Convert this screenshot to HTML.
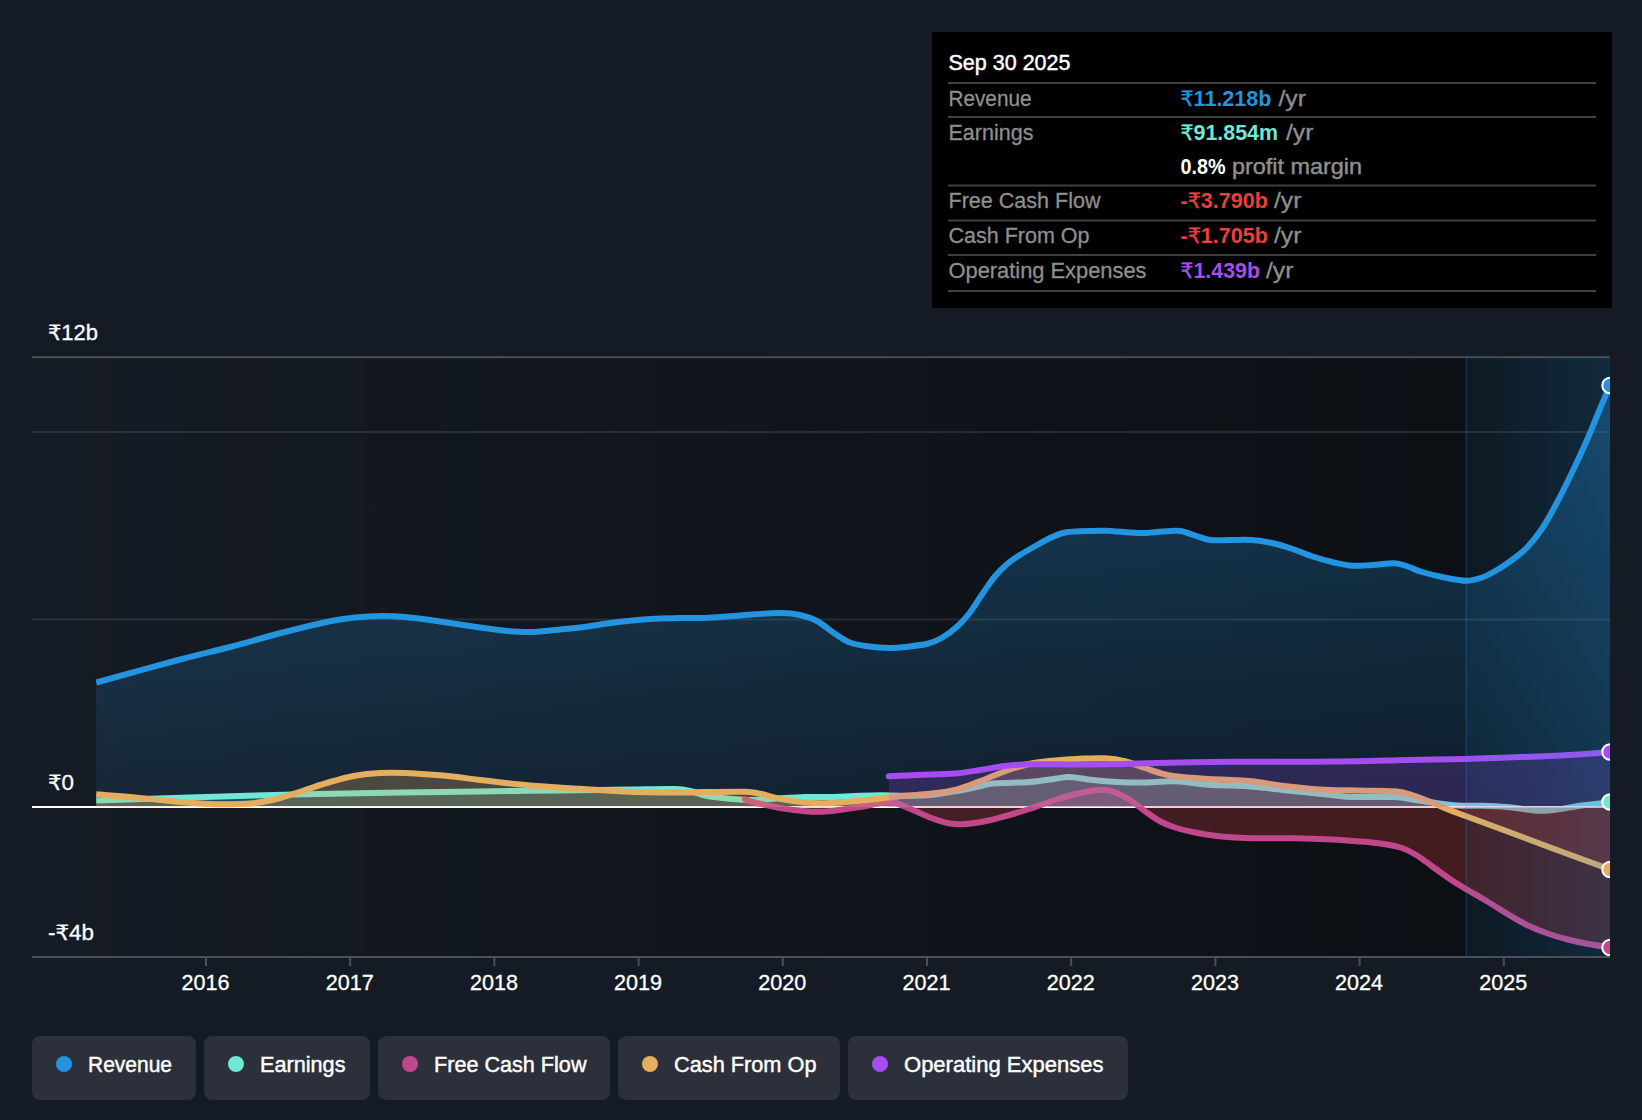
<!DOCTYPE html>
<html lang="en">
<head>
<meta charset="utf-8">
<title>Earnings and Revenue History</title>
<style>
html,body{margin:0;padding:0;background:#151b24;}
body{width:1642px;height:1120px;overflow:hidden;font-family:"Liberation Sans","DejaVu Sans",sans-serif;}
svg{display:block;position:absolute;left:0;top:0;}
text{font-family:"Liberation Sans","DejaVu Sans",sans-serif;font-size:22px;}
.rs{font-family:"DejaVu Sans",sans-serif;}
.ax{fill:#ffffff;}
.lab{fill:#8f8f8f;}
.md{stroke-width:0.45px;paint-order:stroke;}
.b{font-weight:700;}
.vals text{paint-order:stroke;stroke-width:0;}
.sk{stroke:#fff;stroke-width:0.3px;paint-order:stroke;}
.lab{stroke:#8f8f8f;stroke-width:0.3px;paint-order:stroke;}
</style>
</head>
<body>
<svg width="1642" height="1120" viewBox="0 0 1642 1120">
<defs>
  <linearGradient id="plotbg" x1="32" x2="1466" y1="0" y2="0" gradientUnits="userSpaceOnUse">
    <stop offset="0" stop-color="#000" stop-opacity="0"/>
    <stop offset="1" stop-color="#000" stop-opacity="0.42"/>
  </linearGradient>
  <linearGradient id="hl" x1="1466" x2="1610" y1="0" y2="0" gradientUnits="userSpaceOnUse">
    <stop offset="0" stop-color="#2394df" stop-opacity="0.075"/>
    <stop offset="1" stop-color="#2394df" stop-opacity="0.20"/>
  </linearGradient>
  <linearGradient id="revfill" x1="0" x2="0" y1="385" y2="806" gradientUnits="userSpaceOnUse">
    <stop offset="0" stop-color="#2394df" stop-opacity="0.315"/>
    <stop offset="1" stop-color="#2394df" stop-opacity="0.105"/>
  </linearGradient>
  <linearGradient id="revhl" x1="1466" x2="1610" y1="0" y2="0" gradientUnits="userSpaceOnUse">
    <stop offset="0" stop-color="#2394df" stop-opacity="0.02"/>
    <stop offset="1" stop-color="#2394df" stop-opacity="0.28"/>
  </linearGradient>
  <clipPath id="plotclip"><rect x="32" y="340" width="1578" height="640"/></clipPath>
  <clipPath id="hlclip"><rect x="1466" y="340" width="144" height="640"/></clipPath>
  <clipPath id="above"><rect x="32" y="340" width="1578" height="467"/></clipPath>
  <clipPath id="below"><rect x="32" y="807" width="1578" height="200"/></clipPath>
</defs>

<!-- plot background -->
<rect x="32" y="357" width="1434" height="600" fill="url(#plotbg)"/>
<rect x="1466" y="357" width="144" height="600" fill="#000" fill-opacity="0.42"/>

<!-- gridlines -->
<rect x="32" y="356.2" width="1578" height="2" fill="#ffffff" fill-opacity="0.23"/>
<rect x="32" y="431" width="1578" height="2" fill="#ffffff" fill-opacity="0.10"/>
<rect x="32" y="618.5" width="1578" height="2" fill="#ffffff" fill-opacity="0.10"/>

<g clip-path="url(#plotclip)">
  <!-- revenue -->
  <path d="M96.25,682.50C110.21,678.67 157.71,665.42 180.00,659.50C202.29,653.58 213.33,651.38 230.00,647.00C246.67,642.62 263.33,637.54 280.00,633.25C296.67,628.96 317.50,623.88 330.00,621.25C342.50,618.62 346.25,618.38 355.00,617.50C363.75,616.62 374.17,616.08 382.50,616.00C390.83,615.92 397.08,616.33 405.00,617.00C412.92,617.67 421.67,618.88 430.00,620.00C438.33,621.12 446.67,622.50 455.00,623.75C463.33,625.00 471.67,626.33 480.00,627.50C488.33,628.67 496.67,630.00 505.00,630.75C513.33,631.50 521.67,632.12 530.00,632.00C538.33,631.88 546.67,630.75 555.00,630.00C563.33,629.25 571.67,628.54 580.00,627.50C588.33,626.46 596.67,624.88 605.00,623.75C613.33,622.62 621.67,621.58 630.00,620.75C638.33,619.92 646.67,619.21 655.00,618.75C663.33,618.29 671.67,618.12 680.00,618.00C688.33,617.88 696.67,618.29 705.00,618.00C713.33,617.71 721.67,616.88 730.00,616.25C738.33,615.62 746.67,614.79 755.00,614.25C763.33,613.71 772.50,612.88 780.00,613.00C787.50,613.12 793.75,613.62 800.00,615.00C806.25,616.38 811.67,618.12 817.50,621.25C823.33,624.38 829.58,630.21 835.00,633.75C840.42,637.29 844.58,640.42 850.00,642.50C855.42,644.58 860.83,645.33 867.50,646.25C874.17,647.17 883.75,647.88 890.00,648.00C896.25,648.12 898.75,647.71 905.00,647.00C911.25,646.29 921.25,645.33 927.50,643.75C933.75,642.17 937.50,640.42 942.50,637.50C947.50,634.58 952.92,630.42 957.50,626.25C962.08,622.08 965.83,617.92 970.00,612.50C974.17,607.08 978.33,599.79 982.50,593.75C986.67,587.71 990.83,581.25 995.00,576.25C999.17,571.25 1003.33,567.29 1007.50,563.75C1011.67,560.21 1015.42,557.92 1020.00,555.00C1024.58,552.08 1030.00,549.08 1035.00,546.25C1040.00,543.42 1045.00,540.29 1050.00,538.00C1055.00,535.71 1060.00,533.62 1065.00,532.50C1070.00,531.38 1073.33,531.54 1080.00,531.25C1086.67,530.96 1096.67,530.54 1105.00,530.75C1113.33,530.96 1123.33,532.12 1130.00,532.50C1136.67,532.88 1139.58,533.17 1145.00,533.00C1150.42,532.83 1156.67,531.83 1162.50,531.50C1168.33,531.17 1174.58,530.33 1180.00,531.00C1185.42,531.67 1190.00,534.00 1195.00,535.50C1200.00,537.00 1204.17,539.25 1210.00,540.00C1215.83,540.75 1223.00,540.00 1230.00,540.00C1237.00,540.00 1245.00,539.50 1252.00,540.00C1259.00,540.50 1265.33,541.54 1272.00,543.00C1278.67,544.46 1285.33,546.54 1292.00,548.75C1298.67,550.96 1305.33,554.04 1312.00,556.25C1318.67,558.46 1325.33,560.42 1332.00,562.00C1338.67,563.58 1345.33,565.25 1352.00,565.75C1358.67,566.25 1364.92,565.42 1372.00,565.00C1379.08,564.58 1388.67,563.04 1394.50,563.25C1400.33,563.46 1402.42,564.79 1407.00,566.25C1411.58,567.71 1415.75,570.12 1422.00,572.00C1428.25,573.88 1437.12,576.04 1444.50,577.50C1451.88,578.96 1460.00,580.75 1466.25,580.75C1472.50,580.75 1476.88,579.29 1482.00,577.50C1487.12,575.71 1492.00,572.92 1497.00,570.00C1502.00,567.08 1507.00,563.75 1512.00,560.00C1517.00,556.25 1522.00,552.71 1527.00,547.50C1532.00,542.29 1537.00,536.25 1542.00,528.75C1547.00,521.25 1552.00,511.88 1557.00,502.50C1562.00,493.12 1567.00,482.92 1572.00,472.50C1577.00,462.08 1582.42,450.42 1587.00,440.00C1591.58,429.58 1595.67,419.08 1599.50,410.00C1603.33,400.92 1608.25,389.58 1610.00,385.50L1610.00,807L96.25,807Z" fill="url(#revfill)"/>
  <path d="M96.25,682.50C110.21,678.67 157.71,665.42 180.00,659.50C202.29,653.58 213.33,651.38 230.00,647.00C246.67,642.62 263.33,637.54 280.00,633.25C296.67,628.96 317.50,623.88 330.00,621.25C342.50,618.62 346.25,618.38 355.00,617.50C363.75,616.62 374.17,616.08 382.50,616.00C390.83,615.92 397.08,616.33 405.00,617.00C412.92,617.67 421.67,618.88 430.00,620.00C438.33,621.12 446.67,622.50 455.00,623.75C463.33,625.00 471.67,626.33 480.00,627.50C488.33,628.67 496.67,630.00 505.00,630.75C513.33,631.50 521.67,632.12 530.00,632.00C538.33,631.88 546.67,630.75 555.00,630.00C563.33,629.25 571.67,628.54 580.00,627.50C588.33,626.46 596.67,624.88 605.00,623.75C613.33,622.62 621.67,621.58 630.00,620.75C638.33,619.92 646.67,619.21 655.00,618.75C663.33,618.29 671.67,618.12 680.00,618.00C688.33,617.88 696.67,618.29 705.00,618.00C713.33,617.71 721.67,616.88 730.00,616.25C738.33,615.62 746.67,614.79 755.00,614.25C763.33,613.71 772.50,612.88 780.00,613.00C787.50,613.12 793.75,613.62 800.00,615.00C806.25,616.38 811.67,618.12 817.50,621.25C823.33,624.38 829.58,630.21 835.00,633.75C840.42,637.29 844.58,640.42 850.00,642.50C855.42,644.58 860.83,645.33 867.50,646.25C874.17,647.17 883.75,647.88 890.00,648.00C896.25,648.12 898.75,647.71 905.00,647.00C911.25,646.29 921.25,645.33 927.50,643.75C933.75,642.17 937.50,640.42 942.50,637.50C947.50,634.58 952.92,630.42 957.50,626.25C962.08,622.08 965.83,617.92 970.00,612.50C974.17,607.08 978.33,599.79 982.50,593.75C986.67,587.71 990.83,581.25 995.00,576.25C999.17,571.25 1003.33,567.29 1007.50,563.75C1011.67,560.21 1015.42,557.92 1020.00,555.00C1024.58,552.08 1030.00,549.08 1035.00,546.25C1040.00,543.42 1045.00,540.29 1050.00,538.00C1055.00,535.71 1060.00,533.62 1065.00,532.50C1070.00,531.38 1073.33,531.54 1080.00,531.25C1086.67,530.96 1096.67,530.54 1105.00,530.75C1113.33,530.96 1123.33,532.12 1130.00,532.50C1136.67,532.88 1139.58,533.17 1145.00,533.00C1150.42,532.83 1156.67,531.83 1162.50,531.50C1168.33,531.17 1174.58,530.33 1180.00,531.00C1185.42,531.67 1190.00,534.00 1195.00,535.50C1200.00,537.00 1204.17,539.25 1210.00,540.00C1215.83,540.75 1223.00,540.00 1230.00,540.00C1237.00,540.00 1245.00,539.50 1252.00,540.00C1259.00,540.50 1265.33,541.54 1272.00,543.00C1278.67,544.46 1285.33,546.54 1292.00,548.75C1298.67,550.96 1305.33,554.04 1312.00,556.25C1318.67,558.46 1325.33,560.42 1332.00,562.00C1338.67,563.58 1345.33,565.25 1352.00,565.75C1358.67,566.25 1364.92,565.42 1372.00,565.00C1379.08,564.58 1388.67,563.04 1394.50,563.25C1400.33,563.46 1402.42,564.79 1407.00,566.25C1411.58,567.71 1415.75,570.12 1422.00,572.00C1428.25,573.88 1437.12,576.04 1444.50,577.50C1451.88,578.96 1460.00,580.75 1466.25,580.75C1472.50,580.75 1476.88,579.29 1482.00,577.50C1487.12,575.71 1492.00,572.92 1497.00,570.00C1502.00,567.08 1507.00,563.75 1512.00,560.00C1517.00,556.25 1522.00,552.71 1527.00,547.50C1532.00,542.29 1537.00,536.25 1542.00,528.75C1547.00,521.25 1552.00,511.88 1557.00,502.50C1562.00,493.12 1567.00,482.92 1572.00,472.50C1577.00,462.08 1582.42,450.42 1587.00,440.00C1591.58,429.58 1595.67,419.08 1599.50,410.00C1603.33,400.92 1608.25,389.58 1610.00,385.50" fill="none" stroke="#2394df" stroke-width="6" stroke-linejoin="round" stroke-linecap="butt"/>

  <!-- earnings -->
  <path d="M96.25,800.50C122.71,799.67 216.04,796.62 255.00,795.50C293.96,794.38 292.50,794.42 330.00,793.75C367.50,793.08 446.67,792.00 480.00,791.50C513.33,791.00 513.33,790.95 530.00,790.75C546.67,790.55 563.33,790.49 580.00,790.30C596.67,790.11 614.17,789.82 630.00,789.60C645.83,789.38 664.67,788.68 675.00,789.00C685.33,789.32 687.00,790.42 692.00,791.50C697.00,792.58 698.67,794.29 705.00,795.50C711.33,796.71 721.67,798.00 730.00,798.75C738.33,799.50 746.67,800.08 755.00,800.00C763.33,799.92 771.67,798.80 780.00,798.30C788.33,797.80 796.67,797.22 805.00,797.00C813.33,796.78 821.67,797.17 830.00,797.00C838.33,796.83 846.67,796.28 855.00,796.00C863.33,795.72 871.67,795.34 880.00,795.30C888.33,795.26 896.67,795.80 905.00,795.75C913.33,795.70 921.67,795.75 930.00,795.00C938.33,794.25 946.67,792.71 955.00,791.25C963.33,789.79 973.33,787.58 980.00,786.25C986.67,784.92 986.67,783.96 995.00,783.25C1003.33,782.54 1020.00,782.75 1030.00,782.00C1040.00,781.25 1048.33,779.58 1055.00,778.75C1061.67,777.92 1063.75,776.79 1070.00,777.00C1076.25,777.21 1084.58,779.17 1092.50,780.00C1100.42,780.83 1109.17,781.58 1117.50,782.00C1125.83,782.42 1132.92,782.62 1142.50,782.50C1152.08,782.38 1164.58,780.92 1175.00,781.25C1185.42,781.58 1195.50,783.79 1205.00,784.50C1214.50,785.21 1223.33,785.08 1232.00,785.50C1240.67,785.92 1246.58,786.04 1257.00,787.00C1267.42,787.96 1282.00,789.92 1294.50,791.25C1307.00,792.58 1322.42,794.04 1332.00,795.00C1341.58,795.96 1341.58,796.67 1352.00,797.00C1362.42,797.33 1384.50,796.58 1394.50,797.00C1404.50,797.42 1405.75,798.58 1412.00,799.50C1418.25,800.42 1424.50,801.50 1432.00,802.50C1439.50,803.50 1448.67,804.96 1457.00,805.50C1465.33,806.04 1473.67,805.50 1482.00,805.75C1490.33,806.00 1499.50,806.38 1507.00,807.00C1514.50,807.62 1521.17,808.88 1527.00,809.50C1532.83,810.12 1537.00,810.75 1542.00,810.75C1547.00,810.75 1550.33,810.38 1557.00,809.50C1563.67,808.62 1573.17,806.75 1582.00,805.50C1590.83,804.25 1605.33,802.58 1610.00,802.00L1610.00,807L96.25,807Z" fill="#71e7d6" fill-opacity="0.20"/>
  <path d="M96.25,800.50C122.71,799.67 216.04,796.62 255.00,795.50C293.96,794.38 292.50,794.42 330.00,793.75C367.50,793.08 446.67,792.00 480.00,791.50C513.33,791.00 513.33,790.95 530.00,790.75C546.67,790.55 563.33,790.49 580.00,790.30C596.67,790.11 614.17,789.82 630.00,789.60C645.83,789.38 664.67,788.68 675.00,789.00C685.33,789.32 687.00,790.42 692.00,791.50C697.00,792.58 698.67,794.29 705.00,795.50C711.33,796.71 721.67,798.00 730.00,798.75C738.33,799.50 746.67,800.08 755.00,800.00C763.33,799.92 771.67,798.80 780.00,798.30C788.33,797.80 796.67,797.22 805.00,797.00C813.33,796.78 821.67,797.17 830.00,797.00C838.33,796.83 846.67,796.28 855.00,796.00C863.33,795.72 871.67,795.34 880.00,795.30C888.33,795.26 896.67,795.80 905.00,795.75C913.33,795.70 921.67,795.75 930.00,795.00C938.33,794.25 946.67,792.71 955.00,791.25C963.33,789.79 973.33,787.58 980.00,786.25C986.67,784.92 986.67,783.96 995.00,783.25C1003.33,782.54 1020.00,782.75 1030.00,782.00C1040.00,781.25 1048.33,779.58 1055.00,778.75C1061.67,777.92 1063.75,776.79 1070.00,777.00C1076.25,777.21 1084.58,779.17 1092.50,780.00C1100.42,780.83 1109.17,781.58 1117.50,782.00C1125.83,782.42 1132.92,782.62 1142.50,782.50C1152.08,782.38 1164.58,780.92 1175.00,781.25C1185.42,781.58 1195.50,783.79 1205.00,784.50C1214.50,785.21 1223.33,785.08 1232.00,785.50C1240.67,785.92 1246.58,786.04 1257.00,787.00C1267.42,787.96 1282.00,789.92 1294.50,791.25C1307.00,792.58 1322.42,794.04 1332.00,795.00C1341.58,795.96 1341.58,796.67 1352.00,797.00C1362.42,797.33 1384.50,796.58 1394.50,797.00C1404.50,797.42 1405.75,798.58 1412.00,799.50C1418.25,800.42 1424.50,801.50 1432.00,802.50C1439.50,803.50 1448.67,804.96 1457.00,805.50C1465.33,806.04 1473.67,805.50 1482.00,805.75C1490.33,806.00 1499.50,806.38 1507.00,807.00C1514.50,807.62 1521.17,808.88 1527.00,809.50C1532.83,810.12 1537.00,810.75 1542.00,810.75C1547.00,810.75 1550.33,810.38 1557.00,809.50C1563.67,808.62 1573.17,806.75 1582.00,805.50C1590.83,804.25 1605.33,802.58 1610.00,802.00" fill="none" stroke="#71e7d6" stroke-width="6" stroke-linejoin="round"/>

  <!-- zero line -->
  <rect x="32" y="806" width="1578" height="2" fill="#ffffff"/>

  <!-- fcf -->
  <g clip-path="url(#below)"><path d="M745.00,799.25C746.67,799.79 749.17,801.04 755.00,802.50C760.83,803.96 771.67,806.54 780.00,808.00C788.33,809.46 797.92,810.62 805.00,811.25C812.08,811.88 816.25,812.04 822.50,811.75C828.75,811.46 835.00,810.50 842.50,809.50C850.00,808.50 861.25,806.83 867.50,805.75C873.75,804.67 875.42,803.46 880.00,803.00C884.58,802.54 890.00,802.04 895.00,803.00C900.00,803.96 904.17,806.33 910.00,808.75C915.83,811.17 923.75,815.12 930.00,817.50C936.25,819.88 942.08,821.88 947.50,823.00C952.92,824.12 956.25,824.54 962.50,824.25C968.75,823.96 977.92,822.58 985.00,821.25C992.08,819.92 997.50,818.33 1005.00,816.25C1012.50,814.17 1021.67,811.46 1030.00,808.75C1038.33,806.04 1046.67,802.62 1055.00,800.00C1063.33,797.38 1072.50,794.67 1080.00,793.00C1087.50,791.33 1094.58,790.29 1100.00,790.00C1105.42,789.71 1107.50,789.58 1112.50,791.25C1117.50,792.92 1124.58,796.67 1130.00,800.00C1135.42,803.33 1140.00,807.71 1145.00,811.25C1150.00,814.79 1155.00,818.54 1160.00,821.25C1165.00,823.96 1169.17,825.62 1175.00,827.50C1180.83,829.38 1188.33,831.12 1195.00,832.50C1201.67,833.88 1208.33,834.92 1215.00,835.75C1221.67,836.58 1228.00,837.08 1235.00,837.50C1242.00,837.92 1247.08,838.12 1257.00,838.25C1266.92,838.38 1282.00,838.04 1294.50,838.25C1307.00,838.46 1321.58,839.00 1332.00,839.50C1342.42,840.00 1348.67,840.54 1357.00,841.25C1365.33,841.96 1374.50,842.62 1382.00,843.75C1389.50,844.88 1396.17,846.04 1402.00,848.00C1407.83,849.96 1412.00,852.46 1417.00,855.50C1422.00,858.54 1426.58,862.38 1432.00,866.25C1437.42,870.12 1443.79,874.92 1449.50,878.75C1455.21,882.58 1460.00,885.50 1466.25,889.25C1472.50,893.00 1480.21,897.17 1487.00,901.25C1493.79,905.33 1500.33,909.79 1507.00,913.75C1513.67,917.71 1520.33,921.75 1527.00,925.00C1533.67,928.25 1540.33,930.88 1547.00,933.25C1553.67,935.62 1560.33,937.50 1567.00,939.25C1573.67,941.00 1579.83,942.38 1587.00,943.75C1594.17,945.12 1606.17,946.88 1610.00,947.50L1610.00,807L745.00,807Z" fill="#e64141" fill-opacity="0.25"/></g>
  <g clip-path="url(#above)"><path d="M745.00,799.25C746.67,799.79 749.17,801.04 755.00,802.50C760.83,803.96 771.67,806.54 780.00,808.00C788.33,809.46 797.92,810.62 805.00,811.25C812.08,811.88 816.25,812.04 822.50,811.75C828.75,811.46 835.00,810.50 842.50,809.50C850.00,808.50 861.25,806.83 867.50,805.75C873.75,804.67 875.42,803.46 880.00,803.00C884.58,802.54 890.00,802.04 895.00,803.00C900.00,803.96 904.17,806.33 910.00,808.75C915.83,811.17 923.75,815.12 930.00,817.50C936.25,819.88 942.08,821.88 947.50,823.00C952.92,824.12 956.25,824.54 962.50,824.25C968.75,823.96 977.92,822.58 985.00,821.25C992.08,819.92 997.50,818.33 1005.00,816.25C1012.50,814.17 1021.67,811.46 1030.00,808.75C1038.33,806.04 1046.67,802.62 1055.00,800.00C1063.33,797.38 1072.50,794.67 1080.00,793.00C1087.50,791.33 1094.58,790.29 1100.00,790.00C1105.42,789.71 1107.50,789.58 1112.50,791.25C1117.50,792.92 1124.58,796.67 1130.00,800.00C1135.42,803.33 1140.00,807.71 1145.00,811.25C1150.00,814.79 1155.00,818.54 1160.00,821.25C1165.00,823.96 1169.17,825.62 1175.00,827.50C1180.83,829.38 1188.33,831.12 1195.00,832.50C1201.67,833.88 1208.33,834.92 1215.00,835.75C1221.67,836.58 1228.00,837.08 1235.00,837.50C1242.00,837.92 1247.08,838.12 1257.00,838.25C1266.92,838.38 1282.00,838.04 1294.50,838.25C1307.00,838.46 1321.58,839.00 1332.00,839.50C1342.42,840.00 1348.67,840.54 1357.00,841.25C1365.33,841.96 1374.50,842.62 1382.00,843.75C1389.50,844.88 1396.17,846.04 1402.00,848.00C1407.83,849.96 1412.00,852.46 1417.00,855.50C1422.00,858.54 1426.58,862.38 1432.00,866.25C1437.42,870.12 1443.79,874.92 1449.50,878.75C1455.21,882.58 1460.00,885.50 1466.25,889.25C1472.50,893.00 1480.21,897.17 1487.00,901.25C1493.79,905.33 1500.33,909.79 1507.00,913.75C1513.67,917.71 1520.33,921.75 1527.00,925.00C1533.67,928.25 1540.33,930.88 1547.00,933.25C1553.67,935.62 1560.33,937.50 1567.00,939.25C1573.67,941.00 1579.83,942.38 1587.00,943.75C1594.17,945.12 1606.17,946.88 1610.00,947.50L1610.00,807L745.00,807Z" fill="#c2478a" fill-opacity="0.22"/></g>
  <path d="M745.00,799.25C746.67,799.79 749.17,801.04 755.00,802.50C760.83,803.96 771.67,806.54 780.00,808.00C788.33,809.46 797.92,810.62 805.00,811.25C812.08,811.88 816.25,812.04 822.50,811.75C828.75,811.46 835.00,810.50 842.50,809.50C850.00,808.50 861.25,806.83 867.50,805.75C873.75,804.67 875.42,803.46 880.00,803.00C884.58,802.54 890.00,802.04 895.00,803.00C900.00,803.96 904.17,806.33 910.00,808.75C915.83,811.17 923.75,815.12 930.00,817.50C936.25,819.88 942.08,821.88 947.50,823.00C952.92,824.12 956.25,824.54 962.50,824.25C968.75,823.96 977.92,822.58 985.00,821.25C992.08,819.92 997.50,818.33 1005.00,816.25C1012.50,814.17 1021.67,811.46 1030.00,808.75C1038.33,806.04 1046.67,802.62 1055.00,800.00C1063.33,797.38 1072.50,794.67 1080.00,793.00C1087.50,791.33 1094.58,790.29 1100.00,790.00C1105.42,789.71 1107.50,789.58 1112.50,791.25C1117.50,792.92 1124.58,796.67 1130.00,800.00C1135.42,803.33 1140.00,807.71 1145.00,811.25C1150.00,814.79 1155.00,818.54 1160.00,821.25C1165.00,823.96 1169.17,825.62 1175.00,827.50C1180.83,829.38 1188.33,831.12 1195.00,832.50C1201.67,833.88 1208.33,834.92 1215.00,835.75C1221.67,836.58 1228.00,837.08 1235.00,837.50C1242.00,837.92 1247.08,838.12 1257.00,838.25C1266.92,838.38 1282.00,838.04 1294.50,838.25C1307.00,838.46 1321.58,839.00 1332.00,839.50C1342.42,840.00 1348.67,840.54 1357.00,841.25C1365.33,841.96 1374.50,842.62 1382.00,843.75C1389.50,844.88 1396.17,846.04 1402.00,848.00C1407.83,849.96 1412.00,852.46 1417.00,855.50C1422.00,858.54 1426.58,862.38 1432.00,866.25C1437.42,870.12 1443.79,874.92 1449.50,878.75C1455.21,882.58 1460.00,885.50 1466.25,889.25C1472.50,893.00 1480.21,897.17 1487.00,901.25C1493.79,905.33 1500.33,909.79 1507.00,913.75C1513.67,917.71 1520.33,921.75 1527.00,925.00C1533.67,928.25 1540.33,930.88 1547.00,933.25C1553.67,935.62 1560.33,937.50 1567.00,939.25C1573.67,941.00 1579.83,942.38 1587.00,943.75C1594.17,945.12 1606.17,946.88 1610.00,947.50" fill="none" stroke="#c2478a" stroke-width="6" stroke-linejoin="round" stroke-linecap="round"/>

  <!-- cash from op -->
  <g clip-path="url(#below)"><path d="M96.25,794.25C101.88,794.71 116.04,795.71 130.00,797.00C143.96,798.29 167.50,800.88 180.00,802.00C192.50,803.12 196.67,803.38 205.00,803.75C213.33,804.12 221.67,804.38 230.00,804.25C238.33,804.12 246.67,804.04 255.00,803.00C263.33,801.96 271.67,800.17 280.00,798.00C288.33,795.83 296.67,792.67 305.00,790.00C313.33,787.33 321.67,784.38 330.00,782.00C338.33,779.62 346.67,777.25 355.00,775.75C363.33,774.25 371.67,773.46 380.00,773.00C388.33,772.54 396.67,772.75 405.00,773.00C413.33,773.25 421.67,773.88 430.00,774.50C438.33,775.12 446.67,775.83 455.00,776.75C463.33,777.67 467.50,778.54 480.00,780.00C492.50,781.46 513.33,784.04 530.00,785.50C546.67,786.96 563.33,787.71 580.00,788.75C596.67,789.79 613.33,791.12 630.00,791.75C646.67,792.38 667.50,792.46 680.00,792.50C692.50,792.54 694.17,792.12 705.00,792.00C715.83,791.88 735.83,791.46 745.00,791.75C754.17,792.04 754.17,792.59 760.00,793.75C765.83,794.91 772.50,797.24 780.00,798.70C787.50,800.16 797.50,801.74 805.00,802.50C812.50,803.26 816.67,803.46 825.00,803.25C833.33,803.04 845.83,802.04 855.00,801.25C864.17,800.46 871.67,799.42 880.00,798.50C888.33,797.58 896.67,796.54 905.00,795.75C913.33,794.96 921.67,794.71 930.00,793.75C938.33,792.79 946.67,792.08 955.00,790.00C963.33,787.92 971.67,784.38 980.00,781.25C988.33,778.12 996.67,774.17 1005.00,771.25C1013.33,768.33 1021.67,765.54 1030.00,763.75C1038.33,761.96 1046.67,761.33 1055.00,760.50C1063.33,759.67 1071.67,759.12 1080.00,758.75C1088.33,758.38 1097.50,757.83 1105.00,758.25C1112.50,758.67 1118.33,759.62 1125.00,761.25C1131.67,762.88 1139.17,766.04 1145.00,768.00C1150.83,769.96 1155.00,771.62 1160.00,773.00C1165.00,774.38 1167.50,775.29 1175.00,776.25C1182.50,777.21 1195.50,778.12 1205.00,778.75C1214.50,779.38 1224.17,779.58 1232.00,780.00C1239.83,780.42 1243.67,780.29 1252.00,781.25C1260.33,782.21 1270.75,784.38 1282.00,785.75C1293.25,787.12 1307.00,788.71 1319.50,789.50C1332.00,790.29 1344.50,790.21 1357.00,790.50C1369.50,790.79 1385.33,790.50 1394.50,791.25C1403.67,792.00 1405.75,793.12 1412.00,795.00C1418.25,796.88 1425.75,800.00 1432.00,802.50C1438.25,805.00 1443.79,807.71 1449.50,810.00C1455.21,812.29 1456.67,812.71 1466.25,816.25C1475.83,819.79 1491.88,825.62 1507.00,831.25C1522.12,836.88 1539.83,843.62 1557.00,850.00C1574.17,856.38 1601.17,866.25 1610.00,869.50L1610.00,807L96.25,807Z" fill="#e64141" fill-opacity="0.20"/></g>
  <g clip-path="url(#above)"><path d="M96.25,794.25C101.88,794.71 116.04,795.71 130.00,797.00C143.96,798.29 167.50,800.88 180.00,802.00C192.50,803.12 196.67,803.38 205.00,803.75C213.33,804.12 221.67,804.38 230.00,804.25C238.33,804.12 246.67,804.04 255.00,803.00C263.33,801.96 271.67,800.17 280.00,798.00C288.33,795.83 296.67,792.67 305.00,790.00C313.33,787.33 321.67,784.38 330.00,782.00C338.33,779.62 346.67,777.25 355.00,775.75C363.33,774.25 371.67,773.46 380.00,773.00C388.33,772.54 396.67,772.75 405.00,773.00C413.33,773.25 421.67,773.88 430.00,774.50C438.33,775.12 446.67,775.83 455.00,776.75C463.33,777.67 467.50,778.54 480.00,780.00C492.50,781.46 513.33,784.04 530.00,785.50C546.67,786.96 563.33,787.71 580.00,788.75C596.67,789.79 613.33,791.12 630.00,791.75C646.67,792.38 667.50,792.46 680.00,792.50C692.50,792.54 694.17,792.12 705.00,792.00C715.83,791.88 735.83,791.46 745.00,791.75C754.17,792.04 754.17,792.59 760.00,793.75C765.83,794.91 772.50,797.24 780.00,798.70C787.50,800.16 797.50,801.74 805.00,802.50C812.50,803.26 816.67,803.46 825.00,803.25C833.33,803.04 845.83,802.04 855.00,801.25C864.17,800.46 871.67,799.42 880.00,798.50C888.33,797.58 896.67,796.54 905.00,795.75C913.33,794.96 921.67,794.71 930.00,793.75C938.33,792.79 946.67,792.08 955.00,790.00C963.33,787.92 971.67,784.38 980.00,781.25C988.33,778.12 996.67,774.17 1005.00,771.25C1013.33,768.33 1021.67,765.54 1030.00,763.75C1038.33,761.96 1046.67,761.33 1055.00,760.50C1063.33,759.67 1071.67,759.12 1080.00,758.75C1088.33,758.38 1097.50,757.83 1105.00,758.25C1112.50,758.67 1118.33,759.62 1125.00,761.25C1131.67,762.88 1139.17,766.04 1145.00,768.00C1150.83,769.96 1155.00,771.62 1160.00,773.00C1165.00,774.38 1167.50,775.29 1175.00,776.25C1182.50,777.21 1195.50,778.12 1205.00,778.75C1214.50,779.38 1224.17,779.58 1232.00,780.00C1239.83,780.42 1243.67,780.29 1252.00,781.25C1260.33,782.21 1270.75,784.38 1282.00,785.75C1293.25,787.12 1307.00,788.71 1319.50,789.50C1332.00,790.29 1344.50,790.21 1357.00,790.50C1369.50,790.79 1385.33,790.50 1394.50,791.25C1403.67,792.00 1405.75,793.12 1412.00,795.00C1418.25,796.88 1425.75,800.00 1432.00,802.50C1438.25,805.00 1443.79,807.71 1449.50,810.00C1455.21,812.29 1456.67,812.71 1466.25,816.25C1475.83,819.79 1491.88,825.62 1507.00,831.25C1522.12,836.88 1539.83,843.62 1557.00,850.00C1574.17,856.38 1601.17,866.25 1610.00,869.50L1610.00,807L96.25,807Z" fill="#e5ae5f" fill-opacity="0.26"/></g>
  <path d="M96.25,794.25C101.88,794.71 116.04,795.71 130.00,797.00C143.96,798.29 167.50,800.88 180.00,802.00C192.50,803.12 196.67,803.38 205.00,803.75C213.33,804.12 221.67,804.38 230.00,804.25C238.33,804.12 246.67,804.04 255.00,803.00C263.33,801.96 271.67,800.17 280.00,798.00C288.33,795.83 296.67,792.67 305.00,790.00C313.33,787.33 321.67,784.38 330.00,782.00C338.33,779.62 346.67,777.25 355.00,775.75C363.33,774.25 371.67,773.46 380.00,773.00C388.33,772.54 396.67,772.75 405.00,773.00C413.33,773.25 421.67,773.88 430.00,774.50C438.33,775.12 446.67,775.83 455.00,776.75C463.33,777.67 467.50,778.54 480.00,780.00C492.50,781.46 513.33,784.04 530.00,785.50C546.67,786.96 563.33,787.71 580.00,788.75C596.67,789.79 613.33,791.12 630.00,791.75C646.67,792.38 667.50,792.46 680.00,792.50C692.50,792.54 694.17,792.12 705.00,792.00C715.83,791.88 735.83,791.46 745.00,791.75C754.17,792.04 754.17,792.59 760.00,793.75C765.83,794.91 772.50,797.24 780.00,798.70C787.50,800.16 797.50,801.74 805.00,802.50C812.50,803.26 816.67,803.46 825.00,803.25C833.33,803.04 845.83,802.04 855.00,801.25C864.17,800.46 871.67,799.42 880.00,798.50C888.33,797.58 896.67,796.54 905.00,795.75C913.33,794.96 921.67,794.71 930.00,793.75C938.33,792.79 946.67,792.08 955.00,790.00C963.33,787.92 971.67,784.38 980.00,781.25C988.33,778.12 996.67,774.17 1005.00,771.25C1013.33,768.33 1021.67,765.54 1030.00,763.75C1038.33,761.96 1046.67,761.33 1055.00,760.50C1063.33,759.67 1071.67,759.12 1080.00,758.75C1088.33,758.38 1097.50,757.83 1105.00,758.25C1112.50,758.67 1118.33,759.62 1125.00,761.25C1131.67,762.88 1139.17,766.04 1145.00,768.00C1150.83,769.96 1155.00,771.62 1160.00,773.00C1165.00,774.38 1167.50,775.29 1175.00,776.25C1182.50,777.21 1195.50,778.12 1205.00,778.75C1214.50,779.38 1224.17,779.58 1232.00,780.00C1239.83,780.42 1243.67,780.29 1252.00,781.25C1260.33,782.21 1270.75,784.38 1282.00,785.75C1293.25,787.12 1307.00,788.71 1319.50,789.50C1332.00,790.29 1344.50,790.21 1357.00,790.50C1369.50,790.79 1385.33,790.50 1394.50,791.25C1403.67,792.00 1405.75,793.12 1412.00,795.00C1418.25,796.88 1425.75,800.00 1432.00,802.50C1438.25,805.00 1443.79,807.71 1449.50,810.00C1455.21,812.29 1456.67,812.71 1466.25,816.25C1475.83,819.79 1491.88,825.62 1507.00,831.25C1522.12,836.88 1539.83,843.62 1557.00,850.00C1574.17,856.38 1601.17,866.25 1610.00,869.50" fill="none" stroke="#e5ae5f" stroke-width="6" stroke-linejoin="round"/>

  <!-- opex -->
  <path d="M888.75,776.25C893.54,776.04 906.46,775.46 917.50,775.00C928.54,774.54 944.58,774.33 955.00,773.50C965.42,772.67 971.67,771.25 980.00,770.00C988.33,768.75 996.67,766.96 1005.00,766.00C1013.33,765.04 1017.50,764.50 1030.00,764.25C1042.50,764.00 1063.33,764.58 1080.00,764.50C1096.67,764.42 1113.33,764.08 1130.00,763.75C1146.67,763.42 1163.00,762.83 1180.00,762.50C1197.00,762.17 1212.92,761.88 1232.00,761.75C1251.08,761.62 1273.67,761.83 1294.50,761.75C1315.33,761.67 1338.25,761.54 1357.00,761.25C1375.75,760.96 1388.79,760.38 1407.00,760.00C1425.21,759.62 1449.58,759.42 1466.25,759.00C1482.92,758.58 1493.96,757.96 1507.00,757.50C1520.04,757.04 1532.83,756.75 1544.50,756.25C1556.17,755.75 1566.08,755.21 1577.00,754.50C1587.92,753.79 1604.50,752.42 1610.00,752.00L1610.00,807L888.75,807Z" fill="#a64df0" fill-opacity="0.20"/>
  <path d="M888.75,776.25C893.54,776.04 906.46,775.46 917.50,775.00C928.54,774.54 944.58,774.33 955.00,773.50C965.42,772.67 971.67,771.25 980.00,770.00C988.33,768.75 996.67,766.96 1005.00,766.00C1013.33,765.04 1017.50,764.50 1030.00,764.25C1042.50,764.00 1063.33,764.58 1080.00,764.50C1096.67,764.42 1113.33,764.08 1130.00,763.75C1146.67,763.42 1163.00,762.83 1180.00,762.50C1197.00,762.17 1212.92,761.88 1232.00,761.75C1251.08,761.62 1273.67,761.83 1294.50,761.75C1315.33,761.67 1338.25,761.54 1357.00,761.25C1375.75,760.96 1388.79,760.38 1407.00,760.00C1425.21,759.62 1449.58,759.42 1466.25,759.00C1482.92,758.58 1493.96,757.96 1507.00,757.50C1520.04,757.04 1532.83,756.75 1544.50,756.25C1556.17,755.75 1566.08,755.21 1577.00,754.50C1587.92,753.79 1604.50,752.42 1610.00,752.00" fill="none" stroke="#a64df0" stroke-width="6" stroke-linejoin="round" stroke-linecap="round"/>

  <!-- highlight overlay -->
  <rect x="1466" y="357" width="144" height="600" fill="url(#hl)"/>
  <rect x="1465.5" y="357" width="1.5" height="600" fill="#2394df" fill-opacity="0.22"/>

  <!-- markers -->
  <circle cx="1610" cy="385.5" r="7.75" fill="#2394df" stroke="#fff" stroke-width="2"/>
  <circle cx="1610" cy="802" r="7.75" fill="#71e7d6" stroke="#fff" stroke-width="2"/>
  <circle cx="1610" cy="947.5" r="7.75" fill="#c2478a" stroke="#fff" stroke-width="2"/>
  <circle cx="1610" cy="869.5" r="7.75" fill="#e5ae5f" stroke="#fff" stroke-width="2"/>
  <circle cx="1610" cy="752" r="7.75" fill="#a64df0" stroke="#fff" stroke-width="2"/>
</g>

<!-- x axis -->
<rect x="32" y="956" width="1578" height="2" fill="#4a4f58"/>
<g fill="#4a4f58">
  <rect x="205.00" y="957" width="2" height="9"/>
  <rect x="349.20" y="957" width="2" height="9"/>
  <rect x="493.40" y="957" width="2" height="9"/>
  <rect x="637.60" y="957" width="2" height="9"/>
  <rect x="781.80" y="957" width="2" height="9"/>
  <rect x="926.00" y="957" width="2" height="9"/>
  <rect x="1070.20" y="957" width="2" height="9"/>
  <rect x="1214.40" y="957" width="2" height="9"/>
  <rect x="1358.60" y="957" width="2" height="9"/>
  <rect x="1502.80" y="957" width="2" height="9"/>
</g>
<g class="ax sk" text-anchor="middle">
  <text x="205.50" y="990" textLength="48" lengthAdjust="spacingAndGlyphs">2016</text>
  <text x="349.70" y="990" textLength="48" lengthAdjust="spacingAndGlyphs">2017</text>
  <text x="493.90" y="990" textLength="48" lengthAdjust="spacingAndGlyphs">2018</text>
  <text x="638.10" y="990" textLength="48" lengthAdjust="spacingAndGlyphs">2019</text>
  <text x="782.30" y="990" textLength="48" lengthAdjust="spacingAndGlyphs">2020</text>
  <text x="926.50" y="990" textLength="48" lengthAdjust="spacingAndGlyphs">2021</text>
  <text x="1070.70" y="990" textLength="48" lengthAdjust="spacingAndGlyphs">2022</text>
  <text x="1214.90" y="990" textLength="48" lengthAdjust="spacingAndGlyphs">2023</text>
  <text x="1359.10" y="990" textLength="48" lengthAdjust="spacingAndGlyphs">2024</text>
  <text x="1503.30" y="990" textLength="48" lengthAdjust="spacingAndGlyphs">2025</text>
</g>

<!-- y axis labels -->
<g class="ax sk">
  <text x="48" y="340" textLength="50" lengthAdjust="spacingAndGlyphs"><tspan class="rs" font-size="21">₹</tspan>12b</text>
  <text x="48" y="790" textLength="26" lengthAdjust="spacingAndGlyphs"><tspan class="rs" font-size="21">₹</tspan>0</text>
  <text x="48" y="940" textLength="46" lengthAdjust="spacingAndGlyphs">-<tspan class="rs" font-size="21">₹</tspan>4b</text>
</g>

<!-- tooltip -->
<rect x="932" y="32" width="680" height="276" fill="#000"/>
<g fill="#3f3f3f">
  <rect x="948" y="82" width="648" height="2"/>
  <rect x="948" y="116" width="648" height="2"/>
  <rect x="948" y="184.5" width="648" height="2"/>
  <rect x="948" y="219.5" width="648" height="2"/>
  <rect x="948" y="254" width="648" height="2"/>
  <rect x="948" y="290" width="648" height="2"/>
</g>
<text x="948.5" y="70" fill="#fff" stroke="#fff" class="md" textLength="122" lengthAdjust="spacingAndGlyphs">Sep 30 2025</text>
<g class="lab">
  <text x="948.5" y="105.5" textLength="83" lengthAdjust="spacingAndGlyphs">Revenue</text>
  <text x="948.5" y="139.5" textLength="85" lengthAdjust="spacingAndGlyphs">Earnings</text>
  <text x="948.5" y="207.5" textLength="152" lengthAdjust="spacingAndGlyphs">Free Cash Flow</text>
  <text x="948.5" y="243" textLength="141" lengthAdjust="spacingAndGlyphs">Cash From Op</text>
  <text x="948.5" y="277.5" textLength="198" lengthAdjust="spacingAndGlyphs">Operating Expenses</text>
</g>
<g class="b vals">
  <text x="1180.5" y="105.5" fill="#2394df" stroke="#2394df" textLength="91" lengthAdjust="spacingAndGlyphs"><tspan class="rs" font-size="21" font-weight="400" stroke-width="0.4">₹</tspan>11.218b</text>
  <text x="1180.5" y="139.5" fill="#71e7d6" stroke="#71e7d6" textLength="97.5" lengthAdjust="spacingAndGlyphs"><tspan class="rs" font-size="21" font-weight="400" stroke-width="0.4">₹</tspan>91.854m</text>
  <text x="1180.5" y="173.5" fill="#fff" stroke="#fff" textLength="45" lengthAdjust="spacingAndGlyphs">0.8%</text>
  <text x="1180.5" y="207.5" fill="#e64141" stroke="#e64141" textLength="87.5" lengthAdjust="spacingAndGlyphs">-<tspan class="rs" font-size="21" font-weight="400" stroke-width="0.4">₹</tspan>3.790b</text>
  <text x="1180.5" y="243" fill="#e64141" stroke="#e64141" textLength="87.5" lengthAdjust="spacingAndGlyphs">-<tspan class="rs" font-size="21" font-weight="400" stroke-width="0.4">₹</tspan>1.705b</text>
  <text x="1180.5" y="277.5" fill="#a64df0" stroke="#a64df0" textLength="79.5" lengthAdjust="spacingAndGlyphs"><tspan class="rs" font-size="21" font-weight="400" stroke-width="0.4">₹</tspan>1.439b</text>
</g>
<g class="lab">
  <text x="1278.5" y="105.5" textLength="27.5" lengthAdjust="spacingAndGlyphs">/yr</text>
  <text x="1286" y="139.5" textLength="27.5" lengthAdjust="spacingAndGlyphs">/yr</text>
  <text x="1232" y="173.5" class="md" stroke="#8f8f8f" textLength="130" lengthAdjust="spacingAndGlyphs">profit margin</text>
  <text x="1274" y="207.5" textLength="27.5" lengthAdjust="spacingAndGlyphs">/yr</text>
  <text x="1274" y="243" textLength="27.5" lengthAdjust="spacingAndGlyphs">/yr</text>
  <text x="1266" y="277.5" textLength="27.5" lengthAdjust="spacingAndGlyphs">/yr</text>
</g>

<!-- legend -->
<g fill="#2b303a">
  <rect x="32" y="1036" width="164" height="64" rx="8"/>
  <rect x="204" y="1036" width="166" height="64" rx="8"/>
  <rect x="378" y="1036" width="232" height="64" rx="8"/>
  <rect x="618" y="1036" width="222" height="64" rx="8"/>
  <rect x="848" y="1036" width="280" height="64" rx="8"/>
</g>
<circle cx="64" cy="1064" r="8" fill="#2394df"/>
<circle cx="236" cy="1064" r="8" fill="#71e7d6"/>
<circle cx="410" cy="1064" r="8" fill="#c2478a"/>
<circle cx="650" cy="1064" r="8" fill="#e5ae5f"/>
<circle cx="880" cy="1064" r="8" fill="#a64df0"/>
<g fill="#fff" stroke="#fff" class="md">
  <text x="88" y="1071.5" textLength="84" lengthAdjust="spacingAndGlyphs">Revenue</text>
  <text x="260" y="1071.5" textLength="85.5" lengthAdjust="spacingAndGlyphs">Earnings</text>
  <text x="434" y="1071.5" textLength="152.5" lengthAdjust="spacingAndGlyphs">Free Cash Flow</text>
  <text x="674" y="1071.5" textLength="142.5" lengthAdjust="spacingAndGlyphs">Cash From Op</text>
  <text x="904" y="1071.5" textLength="199.5" lengthAdjust="spacingAndGlyphs">Operating Expenses</text>
</g>
</svg>
</body>
</html>
